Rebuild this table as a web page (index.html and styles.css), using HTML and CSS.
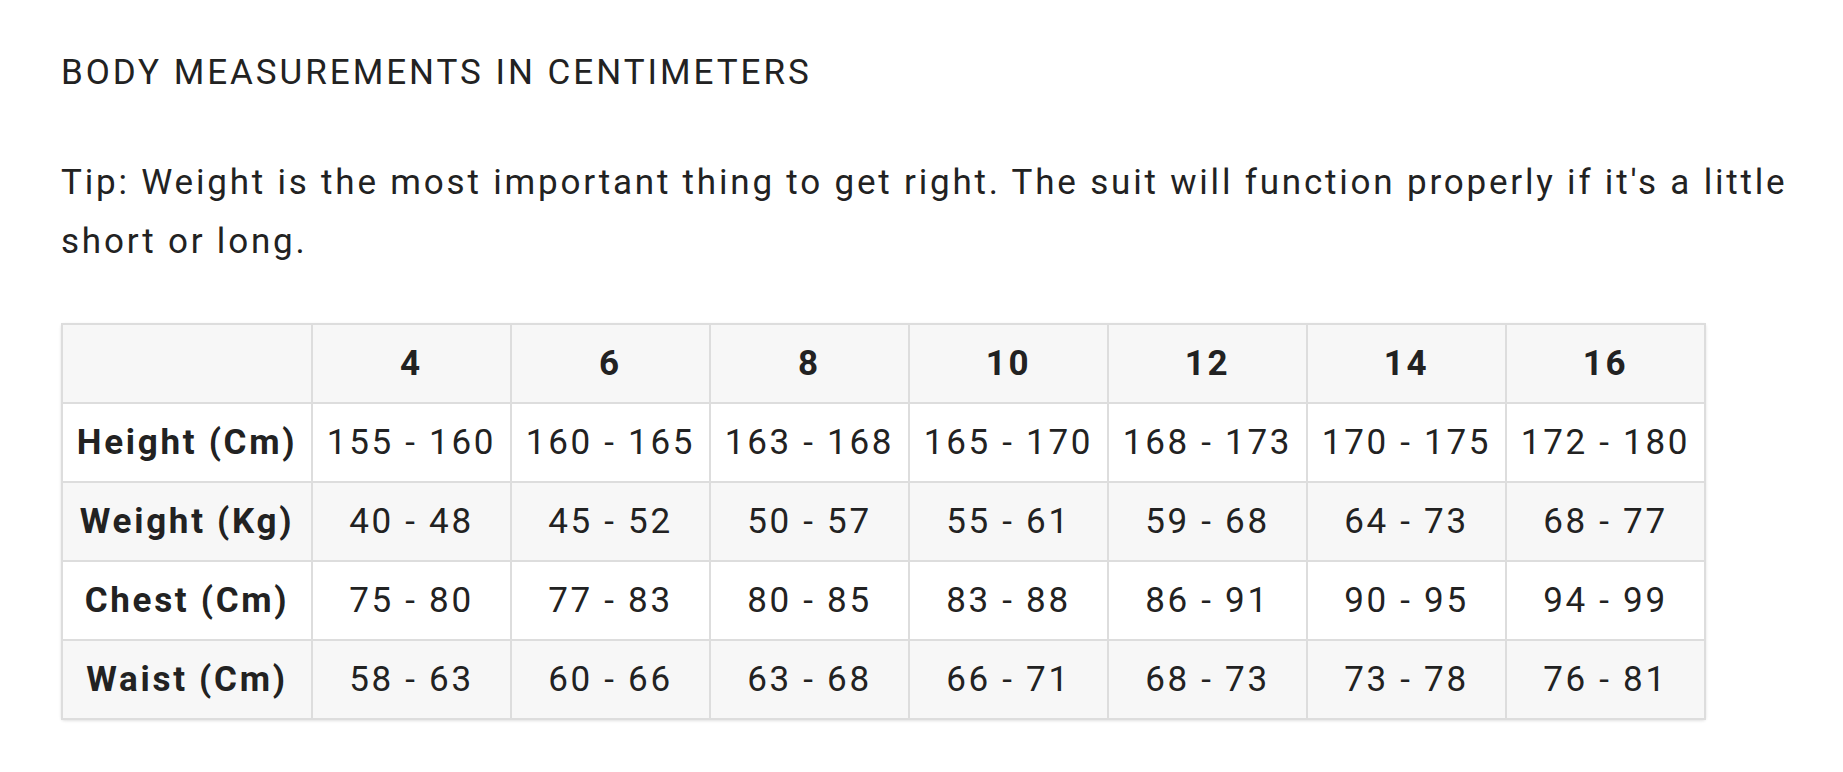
FILE: index.html
```html
<!DOCTYPE html>
<html>
<head>
<meta charset="utf-8">
<link rel="stylesheet" href="styles.css">
</head>
<body>
<div class="page">
  <h2 class="title">BODY MEASUREMENTS IN CENTIMETERS</h2>
  <p class="tip">Tip: Weight is the most important thing to get right. The suit will function properly if it's a little short or long.</p>
  <div class="table-wrap">
    <table class="sizes">
      <tr class="gray head">
        <td class="label"></td><td>4</td><td>6</td><td>8</td><td>10</td><td>12</td><td>14</td><td>16</td>
      </tr>
      <tr>
        <td class="label">Height (Cm)</td><td>155 - 160</td><td>160 - 165</td><td>163 - 168</td><td>165 - 170</td><td>168 - 173</td><td>170 - 175</td><td>172 - 180</td>
      </tr>
      <tr class="gray">
        <td class="label">Weight (Kg)</td><td>40 - 48</td><td>45 - 52</td><td>50 - 57</td><td>55 - 61</td><td>59 - 68</td><td>64 - 73</td><td>68 - 77</td>
      </tr>
      <tr>
        <td class="label">Chest (Cm)</td><td>75 - 80</td><td>77 - 83</td><td>80 - 85</td><td>83 - 88</td><td>86 - 91</td><td>90 - 95</td><td>94 - 99</td>
      </tr>
      <tr class="gray">
        <td class="label">Waist (Cm)</td><td>58 - 63</td><td>60 - 66</td><td>63 - 68</td><td>66 - 71</td><td>68 - 73</td><td>73 - 78</td><td>76 - 81</td>
      </tr>
    </table>
  </div>
</div>
</body>
</html>
```

FILE: styles.css
```css
html, body {
  margin: 0;
  padding: 0;
  background: #ffffff;
}
body {
  font-family: Roboto, "Liberation Sans", sans-serif;
  color: #222222;
}
.page {
  padding: 49px 0 0 61px;
}
.title {
  margin: 0;
  font-size: 35px;
  font-weight: 400;
  letter-spacing: 2.97px;
  line-height: 48px;
}
.tip {
  margin: 56px 0 0 0;
  font-size: 35px;
  line-height: 59px;
  letter-spacing: 2.8px;
  width: 1760px;
}
.table-wrap {
  margin-top: 52px;
  display: inline-block;
  border-radius: 4px;
  box-shadow: 0 1px 3px rgba(0,0,0,0.12);
}
.sizes {
  border-collapse: collapse;
  font-size: 35px;
  letter-spacing: 2.7px;
}
.sizes td {
  border: 2px solid #dddddd;
  height: 77px;
  width: 197px;
  padding: 0;
  text-align: center;
  white-space: nowrap;
}
.sizes td.label {
  width: 248px;
  font-weight: 700;
}
.sizes tr.head td {
  font-weight: 700;
}
.sizes tr.gray td {
  background: #f7f7f7;
}
```
